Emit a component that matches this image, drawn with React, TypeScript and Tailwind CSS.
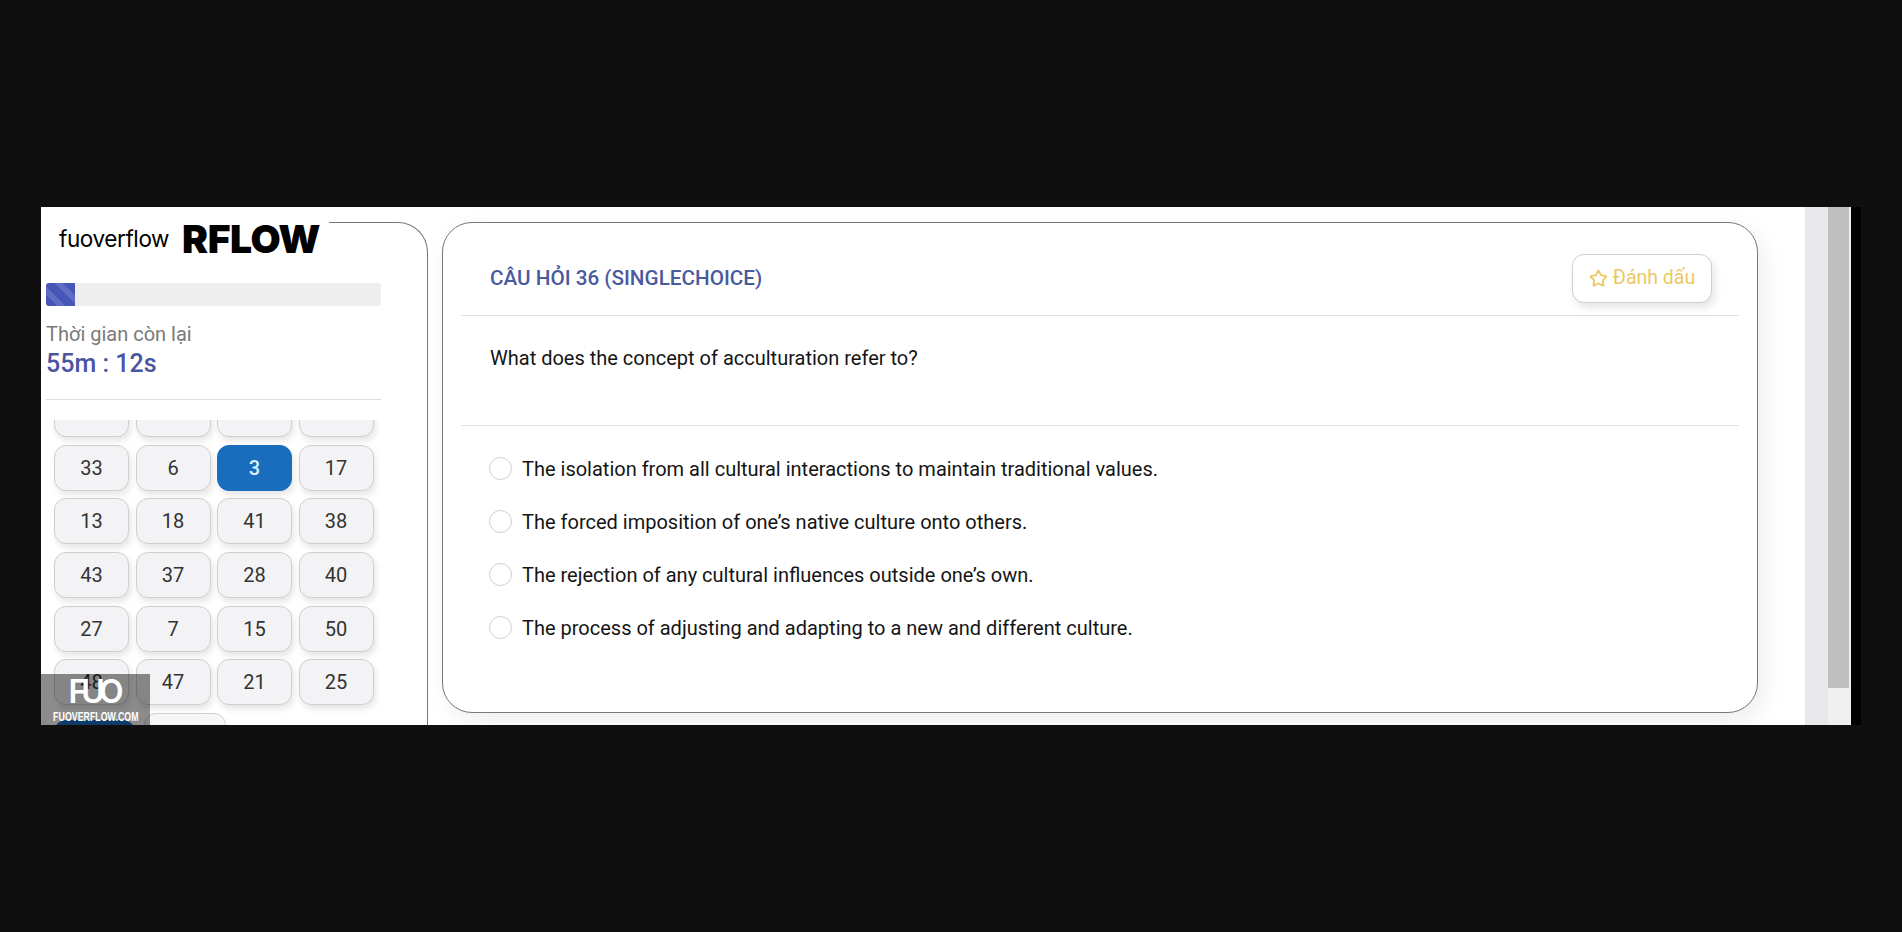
import { Star } from "lucide-react";

const ROWS = [
  ["", "", "", ""],
  ["33", "6", "3", "17"],
  ["13", "18", "41", "38"],
  ["43", "37", "28", "40"],
  ["27", "7", "15", "50"],
  ["48", "47", "21", "25"],
];

const OPTIONS = [
  "The isolation from all cultural interactions to maintain traditional values.",
  "The forced imposition of one’s native culture onto others.",
  "The rejection of any cultural influences outside one’s own.",
  "The process of adjusting and adapting to a new and different culture.",
];

function Sidebar() {
  return (
    <aside className="relative mt-[15px] flex w-[387px] shrink-0 flex-col rounded-tr-[30px] border-t border-r border-[#777] pl-[5px]">
      <div className="-mt-[16px] -ml-[5px] flex h-[60px] w-[288px] items-center bg-white pt-[3px] pl-[18px]">
        <span className="font-['Inter',sans-serif] text-[22.5px] tracking-[-0.4px] text-black">fuoverflow</span>
        <span className="ml-[13px] font-['Inter',sans-serif] text-[39px] leading-none font-black tracking-[-0.5px] text-black">RFLOW</span>
      </div>
      <div className="mt-[16px] h-[23px] w-[335px] overflow-hidden rounded-[3px] bg-[#eeeeef]">
        <div className="h-full w-[29px] bg-[repeating-linear-gradient(45deg,#4556b6_0,#4556b6_8px,#5f6fc6_8px,#5f6fc6_14px)]" />
      </div>
      <div className="mt-[16px] font-['Roboto',sans-serif] text-[20px] leading-[24px] text-[#7a7a7a]">Thời gian còn lại</div>
      <div className="mt-[3px] font-['Roboto',sans-serif] text-[25px] leading-[30px] font-medium text-[#4a55a2]">55m : 12s</div>
      <div className="mt-[20px] h-px w-[335px] bg-[#dddddd]" />
      <div className="mt-[20px] min-h-0 flex-1 overflow-hidden">
        <div className="-mt-[29px] flex flex-col gap-y-[7.7px] pl-[8px]">
          {ROWS.map((row, i) => (
            <div key={i} className="grid w-[320px] grid-cols-[75px_75px_75px_75px] gap-x-[6.5px]">
              {row.map((label, j) => {
                const active = label === "3";
                return (
                  <button
                    key={j}
                    type="button"
                    className={`flex h-[46px] items-center justify-center rounded-[12px] border font-['Roboto',sans-serif] text-[20px] shadow-[2px_4px_6px_rgba(0,0,0,0.1)] ${active ? "border-[#1a6fc4] bg-[#1a6cbd] font-medium text-[#d8f1ff]" : "border-[#cfcfcf] bg-[#f3f3f5] text-[#333]"}`}
                  >
                    {label}
                  </button>
                );
              })}
            </div>
          ))}
          <div className="flex gap-x-[9px]">
            <div className="mt-[7px] h-[39px] w-[81px] rounded-[12px] bg-[#1a6cbd]" />
            <div className="h-[46px] w-[82px] rounded-[12px] border border-[#cfcfcf] bg-[#f6f6f8]" />
          </div>
        </div>
      </div>
      <div className="absolute bottom-0 left-0 flex h-[51px] w-[109px] flex-col items-center bg-[rgba(0,0,0,0.45)] text-white">
        <span className="pr-[5px] font-['Inter',sans-serif] text-[32px] leading-[36px] font-semibold tracking-[-6px]">FUO</span>
        <span className="scale-x-[0.68] font-['Liberation_Sans',sans-serif] text-[13px] leading-[14px] font-bold whitespace-nowrap">FUOVERFLOW.COM</span>
      </div>
    </aside>
  );
}

function QuestionCard() {
  return (
    <section className="ml-[14px] flex h-[491px] w-[1316px] flex-col rounded-[30px] border border-[#777] bg-white px-[18px] shadow-[6px_8px_24px_rgba(0,0,0,0.07)]">
      <header className="flex h-[93px] shrink-0 items-center justify-between border-b border-[#e2e2e2] pt-[19px] pr-[27px] pl-[29px]">
        <h2 className="mt-[1px] font-['Roboto',sans-serif] text-[20.7px] font-medium text-[#4a5a9e]">CÂU HỎI 36 (SINGLECHOICE)</h2>
        <button
          type="button"
          className="-mt-[1px] flex h-[49px] w-[140px] items-center justify-center gap-[5px] rounded-[12px] border border-[#cfcfcf] bg-white font-['Roboto',sans-serif] text-[19.5px] text-[#ecc862] shadow-[3px_5px_8px_rgba(0,0,0,0.1)]"
        >
          <Star size={19} strokeWidth={2.25} />
          Đánh dấu
        </button>
      </header>
      <div className="flex h-[110px] shrink-0 border-b border-[#e2e2e2] pt-[29px] pl-[29px] font-['Roboto',sans-serif] text-[20px] leading-[26px] text-[#151515]">
        What does the concept of acculturation refer to?
      </div>
      <div className="flex flex-col gap-y-[28px] pt-[30px] pl-[28px]">
        {OPTIONS.map((text) => (
          <label key={text} className="flex h-[25px] items-center gap-[10px] font-['Roboto',sans-serif] text-[20px] text-[#151515]">
            <span className="h-[23px] w-[23px] shrink-0 rounded-full border border-[#d0d0d0] bg-white" />
            {text}
          </label>
        ))}
      </div>
    </section>
  );
}

export default function App() {
  return (
    <div className="h-[932px] w-[1902px] overflow-hidden bg-[#0f0f0f] pt-[207px] pl-[41px]">
      <div className="flex h-[518px] w-[1820px] overflow-hidden bg-white">
        <Sidebar />
        <main className="w-[1377px] shrink-0 pt-[15px]">
          <QuestionCard />
        </main>
        <div className="w-[23px] shrink-0 bg-[#e8e8ea]" />
        <div className="w-[23px] shrink-0 bg-[#efefef] pr-[2px]">
          <div className="h-[481px] bg-[#bfbfbf]" />
        </div>
        <div className="w-[10px] shrink-0 bg-black" />
      </div>
    </div>
  );
}
